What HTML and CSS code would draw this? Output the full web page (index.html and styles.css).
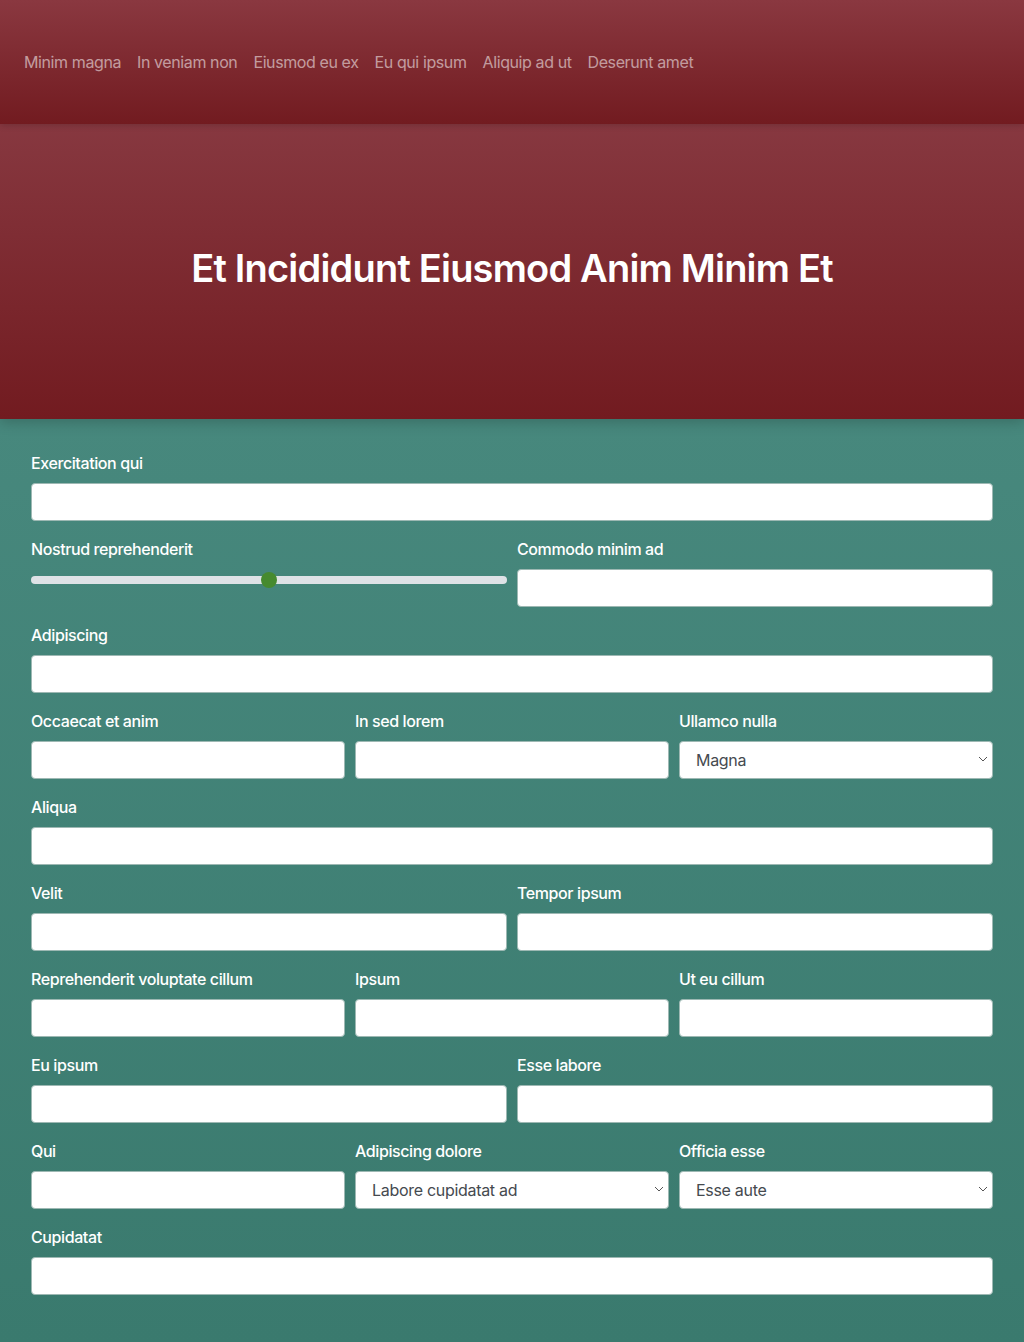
FILE: index.html
```html
<!DOCTYPE html>
<html lang="en">
<head>
<meta charset="utf-8">
<title>Form</title>
<link rel="stylesheet" href="styles.css">
</head>
<body>
<header class="topbar">
  <nav class="nav">
    <a href="#">Minim magna</a>
    <a href="#">In veniam non</a>
    <a href="#">Eiusmod eu ex</a>
    <a href="#">Eu qui ipsum</a>
    <a href="#">Aliquip ad ut</a>
    <a href="#">Deserunt amet</a>
  </nav>
</header>
<section class="hero">
  <h1>Et Incididunt Eiusmod Anim Minim Et</h1>
</section>
<main class="form">
  <div class="row cols-1">
    <div class="field"><label>Exercitation qui</label><input type="text"></div>
  </div>
  <div class="row cols-2">
    <div class="field"><label>Nostrud reprehenderit</label><div class="range"><div class="track"></div><div class="thumb"></div></div></div>
    <div class="field"><label>Commodo minim ad</label><input type="text"></div>
  </div>
  <div class="row cols-1">
    <div class="field"><label>Adipiscing</label><input type="text"></div>
  </div>
  <div class="row cols-3">
    <div class="field"><label>Occaecat et anim</label><input type="text"></div>
    <div class="field"><label>In sed lorem</label><input type="text"></div>
    <div class="field"><label>Ullamco nulla</label><div class="select">Magna<span class="chev"><svg width="10" height="6" viewBox="0 0 10 6"><path d="M1 1l4 4 4-4" fill="none" stroke="#555" stroke-width="1"/></svg></span></div></div>
  </div>
  <div class="row cols-1">
    <div class="field"><label>Aliqua</label><input type="text"></div>
  </div>
  <div class="row cols-2">
    <div class="field"><label>Velit</label><input type="text"></div>
    <div class="field"><label>Tempor ipsum</label><input type="text"></div>
  </div>
  <div class="row cols-3">
    <div class="field"><label>Reprehenderit voluptate cillum</label><input type="text"></div>
    <div class="field"><label>Ipsum</label><input type="text"></div>
    <div class="field"><label>Ut eu cillum</label><input type="text"></div>
  </div>
  <div class="row cols-2">
    <div class="field"><label>Eu ipsum</label><input type="text"></div>
    <div class="field"><label>Esse labore</label><input type="text"></div>
  </div>
  <div class="row cols-3">
    <div class="field"><label>Qui</label><input type="text"></div>
    <div class="field"><label>Adipiscing dolore</label><div class="select">Labore cupidatat ad<span class="chev"><svg width="10" height="6" viewBox="0 0 10 6"><path d="M1 1l4 4 4-4" fill="none" stroke="#555" stroke-width="1"/></svg></span></div></div>
    <div class="field"><label>Officia esse</label><div class="select">Esse aute<span class="chev"><svg width="10" height="6" viewBox="0 0 10 6"><path d="M1 1l4 4 4-4" fill="none" stroke="#555" stroke-width="1"/></svg></span></div></div>
  </div>
  <div class="row cols-1">
    <div class="field"><label>Cupidatat</label><input type="text"></div>
  </div>
</main>
</body>
</html>
```
FILE: styles.css
```css
* { box-sizing: border-box; }
html, body { margin: 0; padding: 0; }
body {
  font-family: Inter, "Noto Sans", "Liberation Sans", sans-serif;
  background: #3a7a6e;
  height: 1342px;
  overflow: hidden;
}
.topbar {
  height: 124px;
  background: linear-gradient(180deg, #8a3840 0%, #721b20 100%);
  display: flex;
  align-items: center;
  padding: 0 24px;
  position: relative;
  z-index: 2;
  box-shadow: 0 2px 6px rgba(0,0,0,0.15);
}
.nav { display: flex; gap: 16px; }
.nav a {
  color: rgba(255,255,255,0.55);
  text-decoration: none;
  font-size: 16px;
  line-height: 24px;
  letter-spacing: -0.4px;
}
.hero {
  height: 295px;
  background: linear-gradient(180deg, #873840 0%, #721b20 100%);
  display: flex;
  align-items: center;
  justify-content: center;
  position: relative;
  z-index: 1;
  box-shadow: 0 4px 12px rgba(0,0,0,0.18);
}
.hero h1 {
  margin: 0;
  color: #fff;
  font-size: 38px;
  font-weight: 600;
  letter-spacing: -0.8px;
  position: relative;
  top: -4px;
}
.form {
  background: linear-gradient(180deg, #47887d 0%, #3a7a6e 100%);
  padding: 32px 31px 47px;
  height: 923px;
  display: flex;
  flex-direction: column;
  gap: 16px;
}
.row { display: grid; gap: 10px; }
.cols-1 { grid-template-columns: 1fr; }
.cols-2 { grid-template-columns: 1fr 1fr; }
.cols-3 { grid-template-columns: 1fr 1fr 1fr; }
.field { display: flex; flex-direction: column; }
.field label {
  color: #fff;
  font-size: 16px;
  font-weight: 450;
  line-height: 24px;
  letter-spacing: -0.4px;
  margin-bottom: 8px;
}
.field input, .select {
  height: 38px;
  width: 100%;
  background: #fff;
  border: 1px solid #9db8b3;
  border-radius: 4px;
  font: inherit;
  font-size: 16px;
}
.select {
  display: flex;
  align-items: center;
  padding: 0 16px;
  color: #454a4f;
  letter-spacing: -0.3px;
  position: relative;
}
.chev {
  position: absolute;
  right: 4px;
  top: 14px;
  display: flex;
}
.range {
  height: 38px;
  position: relative;
}
.track {
  position: absolute;
  left: 0;
  right: 0;
  top: 7px;
  height: 8px;
  background: #dee2e6;
  border-radius: 4px;
}
.thumb {
  position: absolute;
  left: 230px;
  top: 3px;
  width: 16px;
  height: 16px;
  border-radius: 50%;
  background: #468a2f;
}
```
